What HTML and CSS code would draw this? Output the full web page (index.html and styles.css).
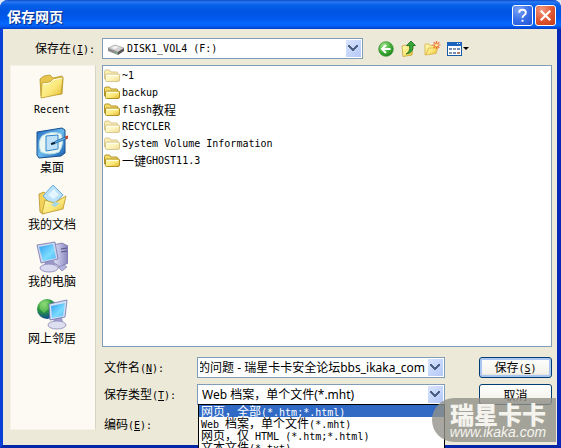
FILE: index.html
```html
<!DOCTYPE html>
<html lang="zh-CN">
<head>
<meta charset="utf-8">
<title>保存网页</title>
<link rel="stylesheet" href="styles.css">
</head>
<body>
<svg class="defs" aria-hidden="true">
  <defs>
    <linearGradient id="gold" x1="0" y1="0" x2="1" y2="1"><stop offset="0" stop-color="#fffbb5"/><stop offset=".55" stop-color="#fbe879"/><stop offset="1" stop-color="#dfb52d"/></linearGradient>
    <linearGradient id="screen" x1="0" y1="0" x2="1" y2="1"><stop offset="0" stop-color="#2f9df0"/><stop offset=".6" stop-color="#7bdcff"/><stop offset="1" stop-color="#4fb8f5"/></linearGradient>
    <linearGradient id="case" x1="0" y1="0" x2="1" y2="0"><stop offset="0" stop-color="#e6e6fa"/><stop offset="1" stop-color="#8583bd"/></linearGradient>
    <linearGradient id="desk" x1="0" y1="0" x2="1" y2="1"><stop offset="0" stop-color="#1e68bd"/><stop offset=".5" stop-color="#69b9ee"/><stop offset="1" stop-color="#1658aa"/></linearGradient>
    <radialGradient id="globe" cx=".35" cy=".25" r=".8"><stop offset="0" stop-color="#a5e986"/><stop offset=".45" stop-color="#2c9a3c"/><stop offset="1" stop-color="#0c3f9c"/></radialGradient>
    <radialGradient id="green" cx=".35" cy=".25" r=".8"><stop offset="0" stop-color="#a3e38c"/><stop offset=".6" stop-color="#3fae35"/><stop offset="1" stop-color="#1f8420"/></radialGradient>
    <symbol id="folder" viewBox="0 0 16 16">
      <path d="M.5 11V3.500Q.5 2 2 2h3.500L7 4h5.500q1 0 1 1v6z" fill="#f6dc68" stroke="#b09226"/>
      <path d="M1.500 12.500V7q0-1 1-1H14q1.500 0 1.500 1v5q0 1.500-1.500 1.500H2.500q-1 0-1-1z" fill="url(#gold)" stroke="#b09226"/>
      <path d="M3 7.500h11" stroke="#fffde0"/>
    </symbol>
  </defs>
</svg>
<main class="window">
  <header class="titlebar">
    <h1>保存网页</h1>
    <button class="cap help" type="button" aria-label="帮助"><svg viewBox="0 0 20 20"><path d="M6.500 7q0-3 3.500-3t3.500 3q0 1.600-1.800 2.700T10 12.500M10 14.500v2" fill="none" stroke="#fff" stroke-width="2"/></svg></button>
    <button class="cap close" type="button" aria-label="关闭"><svg viewBox="0 0 20 20"><path d="M5 5l10 10M15 5L5 15" stroke="#fff" stroke-width="2.300"/></svg></button>
  </header>

  <div class="toolbar">
    <label for="lookin">保存在<span class="en">(<u>I</u>):</span></label>
    <div class="combo lookin">
      <svg class="drive" viewBox="0 0 16 16"><path d="M0 7l7-3 9 3-6 4z" fill="#d2d2d2" stroke="#999" stroke-width=".6"/><path d="M0 7l10 4v3L0 10z" fill="#8b8b8b"/><path d="M10 11l6-4v3l-6 4z" fill="#555"/><path d="M3 7l4-2 4 1-4 2z" fill="#f4f4f4"/><path d="M7 11.500l2 .8" stroke="#70d470"/></svg>
      <select id="lookin" class="mono"><option>DISK1_VOL4 (F:)</option></select>
    </div>
    <div class="tools">
      <button type="button" aria-label="后退"><svg viewBox="0 0 16 16"><circle cx="8" cy="8" r="7.300" fill="url(#green)" stroke="#318d2b" stroke-width=".7"/><path d="M12.500 8H4.500M8 4L4 8l4 4" fill="none" stroke="#fff" stroke-width="2"/></svg></button>
      <button type="button" aria-label="向上一级"><svg viewBox="0 0 16 16"><path d="M1 5l4-1 1 1 6-1-1 10-9 1.500z" fill="url(#gold)" stroke="#c7a333" stroke-width=".8"/><path d="M5 13Q9.500 11 8.500 4.500H5.500L10 0l4.500 4.500H12q.8 7.500-7 8.500z" fill="#37a637" stroke="#176c22" stroke-width=".8"/></svg></button>
      <button type="button" aria-label="新建文件夹"><svg viewBox="0 0 16 16"><path d="M1 14V3h4l1 1.500h6V6l2 .5-2 6z" fill="url(#gold)" stroke="#d9ae4a" stroke-width=".8"/><path d="M2 13.500L4.500 7H13" fill="none" stroke="#d9ae4a" stroke-width=".8"/><path d="M12.500 0v8M8.500 4h8M9.700 1.200l5.600 5.600M15.300 1.200L9.700 6.800" stroke="#ef6a32" stroke-width="1.200"/><circle cx="12.500" cy="4" r="1.500" fill="#fff2a0"/></svg></button>
      <button class="views" type="button" aria-label="查看"><svg viewBox="0 0 24 16"><rect x=".5" y="1.500" width="14" height="13" fill="#fff" stroke="#175aa5"/><path d="M0 1h15v4H0z" fill="#1b64bd"/><path d="M10 2h1v1h-1zM12 2h1v1h-1z" fill="#fff"/><path d="M2 7h3v2H2zM10 7h3v2h-3zM6 11h3v2H6z" fill="#6d8cb7"/><path d="M6 7h3v2H6zM2 11h3v2H2z" fill="#8998a6"/><path d="M10 11h3v2h-3z" fill="#b27a64"/><path d="M16 6h6l-3 3z" fill="#000"/></svg></button>
    </div>
  </div>

  <div class="content">
    <nav class="places">
      <a href="#recent"><svg viewBox="0 0 32 32"><path d="M5 26L4 9l4-3 6-1 3 3 9-2 1 3-1 15z" fill="#e8c64d" stroke="#b69426" stroke-width=".8"/><path d="M5 28l1-15 8-1 3-3 10-2-2 17z" fill="url(#gold)" stroke="#bc9a2a" stroke-width=".8"/><path d="M7 14l7-1 3-3 9-2" fill="none" stroke="#fffde0"/></svg><span class="en">Recent</span></a>
      <a href="#desktop"><svg viewBox="0 0 32 32"><path d="M1 5L26 1l3 2v23l-4 3L3 31l-2-3z" fill="url(#desk)" stroke="#175092"/><path d="M6 9q9-6 19-2 4 9-2 18-9 4-18 0-4-9 1-16z" fill="#eaf7f2" stroke="#b4dce8"/><path d="M10 9l12-1v14l-12 2z" fill="#bfe2f8" stroke="#3586c8"/><path d="M15 17l5-3 9-4 1 2-10 4z" fill="#65b8ec" stroke="#1c5f9c" stroke-width=".8"/><path d="M29 9.500l3-1v3l-2 1z" fill="#c54335"/><path d="M15 17l4-1" stroke="#10253c" stroke-width="2"/></svg><span>桌面</span></a>
      <a href="#documents"><svg viewBox="0 0 32 32"><path d="M3 10l5-2 3 3 12-3 1 5-16 17-4-2z" fill="#f2d25a" stroke="#b8922b" stroke-width=".8"/><path d="M7 12L17 1l10 10-10 11z" fill="#b9e1f8" stroke="#6aaddb"/><path d="M12 11l6-6 5 6-6 4z" fill="#e3f5fe"/><path d="M6 30l3-14 9 3 12-7-3 13z" fill="url(#gold)" stroke="#bc962a" stroke-width=".8"/><path d="M15 21l4-3 5 1-5 4z" fill="#a6d6e9"/></svg><span>我的文档</span></a>
      <a href="#computer"><svg viewBox="0 0 32 32"><path d="M17 4l9-2 6 3v17l-8 4-7-5z" fill="url(#case)" stroke="#7673a8" stroke-width=".8"/><path d="M25 8l6-1M25 11l6-1" stroke="#555282"/><path d="M9 20h9l2 5H8z" fill="#9c9bc8"/><ellipse cx="13" cy="27" rx="9" ry="4" fill="#d9d9f0" stroke="#8583b5" stroke-width=".8"/><path d="M1 4l18-3 3 17-17 4z" fill="#cfd4ef" stroke="#7075ae" stroke-width=".8"/><path d="M3 6l14-3 3 14-13 3z" fill="url(#screen)"/><path d="M22 26l6-2 3 2-5 4z" fill="#b3b1dd" stroke="#7774aa" stroke-width=".6"/></svg><span>我的电脑</span></a>
      <a href="#network"><svg viewBox="0 0 32 32"><circle cx="11" cy="11" r="10" fill="url(#globe)"/><path d="M4 6q5-5 10-3l-4 4 3 3-5 5-4-4z" fill="#7cd06b" opacity=".6"/><path d="M18 19h8l1 6H17z" fill="#a1a0cd"/><ellipse cx="21" cy="27" rx="9" ry="4" fill="#dedef1" stroke="#8a88b7" stroke-width=".8"/><path d="M13 6l18-4-2 17-15 3z" fill="#d8def6" stroke="#6674ae" stroke-width=".8"/><path d="M15 8l14-3-2 13-11 2z" fill="url(#screen)"/></svg><span>网上邻居</span></a>
    </nav>

    <div class="pane">
      <ul class="files">
        <li class="faded"><svg><use href="#folder"/></svg><span class="en">~1</span></li>
        <li><svg><use href="#folder"/></svg><span class="en">backup</span></li>
        <li><svg><use href="#folder"/></svg><span class="en">flash</span>教程</li>
        <li class="faded"><svg><use href="#folder"/></svg><span class="en">RECYCLER</span></li>
        <li class="faded"><svg><use href="#folder"/></svg><span class="en">System Volume Information</span></li>
        <li><svg><use href="#folder"/></svg>一键<span class="en">GHOST11.3</span></li>
      </ul>

      <form class="fields">
        <label for="filename">文件名<span class="en">(<u>N</u>):</span></label>
        <div class="combo"><input id="filename" type="text" dir="rtl" value="的问题 - 瑞星卡卡安全论坛bbs_ikaka_com"><button class="arrow" type="button" aria-label="历史文件名"></button></div>
        <button class="push default" type="button">保存<span class="en">(<u>S</u>)</span></button>

        <label for="filetype">保存类型<span class="en">(<u>T</u>):</span></label>
        <div class="combo">
          <select id="filetype"><option>Web 档案，单个文件(*.mht)</option></select>
          <ul class="popup" role="listbox" aria-label="保存类型">
            <li role="option" aria-selected="true">网页，全部<span class="en">(*.htm;*.html)</span></li>
            <li role="option"><span class="en">Web </span>档案，单个文件<span class="en">(*.mht)</span></li>
            <li role="option">网页，仅<span class="en"> HTML (*.htm;*.html)</span></li>
            <li role="option">文本文件<span class="en">(*.txt)</span></li>
          </ul>
        </div>
        <button class="push" type="button">取消</button>

        <span class="encoding">编码<span class="en">(<u>E</u>):</span></span>
      </form>
    </div>
  </div>
  <div class="watermark"><strong>瑞星卡卡</strong><em>www.ikaka.com</em></div>
</main>
</body>
</html>
```
FILE: styles.css
```css
* { box-sizing: border-box; }

body {
  margin: 0;
  overflow: hidden;
  background: #dfe9f5;
  color: #000;
  font: 12px/16px "Noto Sans CJK SC", sans-serif;
}

button, input, select { font: inherit; color: inherit; margin: 0; }
ul { list-style: none; margin: 0; padding: 0; }
svg { display: block; }
u { text-underline-offset: 1px; }

.defs { position: absolute; width: 0; height: 0; }

.en {
  font-family: "DejaVu Sans Mono", monospace;
  font-size: 10px;
  white-space: pre;
}

.window {
  position: relative;
  display: flex;
  flex-direction: column;
  min-height: 100vh;
  border: solid #0a3fd8;
  border-width: 0 4px 3px 3px;
  border-bottom-color: #0626a8;
  border-right-color: #0829b8;
  border-radius: 8px 8px 0 0;
  background: #ece9d8;
}

.titlebar {
  display: flex;
  align-items: center;
  gap: 2px;
  height: 29px;
  margin: 0 -4px 0 -3px;
  padding: 2px 5px 0 7px;
  border-radius: 8px 8px 0 0;
  background: linear-gradient(#0a4bc8 0, #2a78f5 2px, #0560e8 5px, #0054e3 12px, #0058ee 18px, #0668ff 24px, #0560f5 26px, #003dc8 29px);
}

.titlebar h1 {
  flex: 1;
  margin: 0;
  color: #fff;
  font-size: 14px;
  line-height: 20px;
  text-shadow: 1px 1px 1px #0a2a80;
}

.cap {
  width: 21px;
  height: 21px;
  padding: 0;
  border: 1px solid #fff;
  border-radius: 3px;
}
.cap svg { width: 19px; height: 19px; }
.help { background: radial-gradient(circle at 30% 20%, #7fa5f5, #3b70e8 50%, #2056d6); }
.close { background: radial-gradient(circle at 30% 20%, #f09a80, #e25a35 50%, #c23a14); }

.toolbar {
  display: flex;
  align-items: center;
  padding: 9px 88px 0 32px;
}
.toolbar > label { width: 67px; }

.combo {
  position: relative;
  display: flex;
  height: 21px;
  border: 1px solid #7f9db9;
  background: #fff;
}
.lookin { flex: 1; }
.drive { position: absolute; left: 5px; top: 2px; width: 16px; height: 16px; }

.combo select, .combo input {
  flex: 1;
  min-width: 0;
  padding: 0 0 0 4px;
  border: 0;
  border-radius: 0;
  outline: 0;
  appearance: none;
  background: transparent;
  font-family: "Noto Sans", "Noto Sans CJK SC", sans-serif;
  line-height: 19px;
}
.combo input { padding: 0 2px; }
.combo select.mono {
  padding-left: 24px;
  font-family: "DejaVu Sans Mono", monospace;
  font-size: 10px;
}

.combo select, .arrow {
  background-image: linear-gradient(45deg, transparent 4px, #4d6185 4px, #4d6185 6px, transparent 6px), linear-gradient(-45deg, transparent 4px, #4d6185 4px, #4d6185 6px, transparent 6px), linear-gradient(135deg, #d9e5ff, #b4c8f6);
  background-repeat: no-repeat;
  background-position: right 9px top 6px, right 4px top 6px, right 1px top 1px;
  background-size: 5px 7px, 5px 7px, 15px 17px;
}
.arrow { width: 17px; padding: 0; border: 0; background-color: transparent; }

.tools { display: flex; gap: 7px; margin-left: 15px; margin-right: -2px; }
.tools button { width: 16px; height: 16px; padding: 0; border: 0; background: none; }
.tools svg { width: 100%; height: 16px; overflow: visible; }
.tools .views { width: 24px; }

.content {
  flex: 1;
  display: grid;
  grid-template-columns: 86px minmax(0, 1fr);
  gap: 6px;
  padding: 6px 5px 7px 7px;
}

.places {
  display: flex;
  flex-direction: column;
  gap: 9px;
  margin-bottom: 8px;
  padding: 4px 2px 4px 0;
  border: 1px solid #f5f2e6;
  border-right-color: #d8d4c4;
  background: #fcfaf2;
}
.places a {
  display: flex;
  flex-direction: column;
  align-items: center;
  color: #000;
  text-decoration: none;
}
.places svg { width: 32px; height: 32px; }
.places span { line-height: 16px; }

.pane { display: flex; flex-direction: column; gap: 10px; }

.files {
  flex: 1;
  padding: 1px;
  border: 1px solid #7f9db9;
  background: #fff;
}
.files li { display: flex; align-items: center; height: 17px; }
.files svg { width: 16px; height: 16px; margin-right: 2px; }
.faded svg { opacity: .5; }

.fields {
  display: grid;
  grid-template-columns: 95px minmax(0, 1fr) 73px;
  grid-template-rows: 21px 21px 27px;
  row-gap: 6px;
  align-items: center;
}
.fields > label, .encoding { padding-left: 2px; }
.fields .combo { margin-right: 34px; }

.push {
  height: 21px;
  padding: 0;
  border: 1px solid #003c74;
  border-radius: 3px;
  background: linear-gradient(#fff, #f3f2ea 80%, #d8d2c2);
  line-height: 16px;
}
.default { box-shadow: inset 0 0 0 2px #a9c5f2; }

.popup {
  position: absolute;
  z-index: 1;
  top: 19px;
  left: 0;
  right: -1px;
  height: 60px;
  border: 1px solid #000;
  background: #fff;
}
.popup li {
  height: 12px;
  padding-left: 2px;
  line-height: 12px;
  white-space: nowrap;
}
.popup li[aria-selected="true"] { background: #316ac5; color: #fff; }

.watermark {
  position: absolute;
  z-index: 2;
  right: 1px;
  bottom: 3px;
  display: flex;
  flex-direction: column;
  align-items: center;
  width: 124px;
  height: 44px;
  padding: 6px 0 0 8px;
  border-radius: 22px 0 0 22px;
  background: rgba(146, 145, 138, .8);
  color: #f4f3ee;
}
.watermark strong { font-size: 24px; font-weight: 900; line-height: 20px; }
.watermark em { font: italic 14px/16px "Liberation Sans", sans-serif; }
```
